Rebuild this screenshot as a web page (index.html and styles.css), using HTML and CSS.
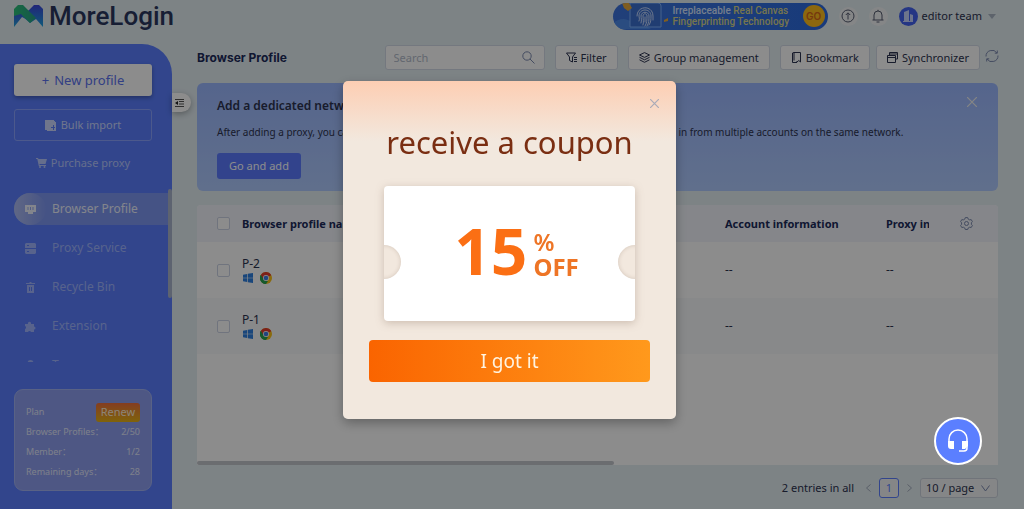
FILE: index.html
```
<!DOCTYPE html>
<html lang="en">
<head>
  <meta charset="UTF-8">
  <meta name="viewport" content="width=device-width, initial-scale=1.0">
  <title>MoreLogin - Browser Profile</title>
  <link rel="stylesheet" href="styles.css">
</head>
<body>

  <!-- shared icons -->
  <svg class="defs" aria-hidden="true">
    <symbol id="windows" viewBox="0 0 12 12">
      <path fill="#2f80e0" d="M0 2l5-.8v4.4H0zM5.8 1L12 0v5.6H5.8zM0 6.4h5v4.4L0 10zM5.8 6.4H12V12l-6.2-1z"/>
    </symbol>
    <symbol id="chrome" viewBox="0 0 24 24">
      <circle cx="12" cy="12" r="12" fill="#fbc116"/>
      <path fill="#e33b2e" d="M12 12L1.6 6a12 12 0 0 1 20.8 0z"/>
      <path fill="#27a350" d="M12 12L1.6 6A12 12 0 0 0 12 24z"/>
      <path fill="#e33b2e" d="M12 6h10.4L12 12 6.800 15 1.600 6z"/>
      <path fill="#27a350" d="M1.600 6l5.200 9L12 18l4 0-4 6A12 12 0 0 1 1.600 6z"/>
      <circle cx="12" cy="12" r="6" fill="#fff"/>
      <circle cx="12" cy="12" r="4.600" fill="#3f7fe8"/>
    </symbol>
  </svg>

  <header class="topbar">
    <a class="logo" href="#">
      <svg width="30" height="24" viewBox="0 0 30 24">
        <defs>
          <linearGradient id="lg-left" x1="0" y1="0" x2="0" y2="1">
            <stop offset="0" stop-color="#3b4fd8"/><stop offset="1" stop-color="#22a6d8"/>
          </linearGradient>
          <linearGradient id="lg-right" x1="0" y1="0" x2="0" y2="1">
            <stop offset="0" stop-color="#3d46dc"/><stop offset="1" stop-color="#1ba3e0"/>
          </linearGradient>
          <linearGradient id="lg-top" x1="0" y1="0" x2="1" y2="0">
            <stop offset="0" stop-color="#2cc178"/><stop offset="1" stop-color="#26a08a"/>
          </linearGradient>
        </defs>
        <path fill="url(#lg-left)" d="M0 8h12l3 4-3 3-4-2-8 10z"/>
        <path fill="url(#lg-right)" d="M15 6l5-5h5l4 4v18l-7-8-6 4-8-7z"/>
        <path fill="url(#lg-top)" d="M0 12V5l4-4h5l13 13-6 5-9-9z"/>
      </svg>
      <span>MoreLogin</span>
    </a>
    <div class="topbar-right">
      <a class="ad" href="#">
        <svg class="ad-art" width="60" height="26" viewBox="0 0 60 26">
          <path fill="#4d8bea" d="M0 20c6-4 12-6 18-1s14 2 20 7H4z"/>
          <path fill="#3b6fd0" stroke="#7fb2ff" d="M17 0h28a3 3 0 0 1 3 3v21H17z"/>
          <path fill="#e8a93b" d="M9 0h7l3 5-4 3-4-3zM51 17l4-2v3l-4 1z"/>
          <path fill="none" stroke="#c9dcff" stroke-linecap="round" d="M24 13c0-11 16-11 16 0v4M26 18c1-2 0-4 0-5 0-8 12-8 12 0 0 4 0 6-2 9M28 20c1-3 0-5 0-7 0-5 8-5 8 0 0 4 0 7-2 10M30 22c1-3 0-6 0-9 0-3 4-3 4 0 0 4 0 7-2 10M32 14v5"/>
        </svg>
        <span class="ad-text"><span class="ad-light">Irreplaceable</span> Real Canvas<br>Fingerprinting Technology</span>
        <span class="ad-go">GO</span>
      </a>
      <button class="round-btn" aria-label="Upgrade">
        <svg width="14" height="14" viewBox="0 0 14 14" class="line"><circle cx="7" cy="7" r="6"/><path d="M7 10.500V4M4.800 6L7 3.800 9.200 6"/></svg>
      </button>
      <button class="round-btn" aria-label="Notifications">
        <svg width="14" height="14" viewBox="0 0 14 14" class="line"><path d="M1.500 11h11M3 11V6a4 4 0 0 1 8 0v5M7 .8V2M5.500 13h3"/></svg>
      </button>
      <button class="user">
        <span class="avatar">
          <svg width="12" height="12" viewBox="0 0 12 12" fill="#c6d3ff"><path d="M2 2l5-2v11H2zM8 4l3 1v6H8zM1 11h10v1H1z"/></svg>
        </span>
        <span>editor team</span>
        <span class="caret"></span>
      </button>
    </div>
  </header>

  <div class="layout">
    <aside class="sidebar">
      <button class="collapse" aria-label="Collapse menu">
        <svg width="9" height="8" viewBox="0 0 9 8"><path stroke="#555" d="M0 .5h9M4 2.500h5M4 5h5M0 7.500h9"/><path fill="#222" d="M0 4l3-2v4z"/></svg>
      </button>
      <button class="side-btn new-profile"><span>+</span> New profile</button>
      <button class="side-btn bulk">
        <svg width="11" height="11" viewBox="0 0 11 11" fill="currentColor"><path d="M0 0h9v1H1v9H0z"/><path fill-rule="evenodd" d="M1 1h9v1h1v9H2v-1H1zM8 5v2H6v1h2v2h1V8h1V7H9V5z"/></svg>
        Bulk import
      </button>
      <a class="purchase" href="#">
        <svg width="11" height="10" viewBox="0 0 11 10" fill="currentColor"><path d="M0 0h2l.5 1H11L9.500 6H3.500l.2 1H10v1H2.800L1.300 1H0z"/><circle cx="4" cy="9" r="1"/><circle cx="8.500" cy="9" r="1"/></svg>
        Purchase proxy
      </a>

      <nav class="menu">
        <a class="menu-item active" href="#">
          <span class="menu-icon"><svg width="11" height="11" viewBox="0 0 11 11" fill="currentColor"><path fill-rule="evenodd" d="M0 1h11v7H0zM2.500 3v3h1V3zM5 3v3h1V3zM7.500 3v3h1V3z"/><path d="M3 8h5v2H3z"/></svg></span>
          Browser Profile
        </a>
        <a class="menu-item" href="#">
          <span class="menu-icon"><svg width="11" height="11" viewBox="0 0 11 11" fill="currentColor"><path fill-rule="evenodd" d="M1 0h9l1 1v4H0V1zM2 2v1h2V2zM0 6h11v4l-1 1H1l-1-1zM2 8v1h2V8z"/></svg></span>
          Proxy Service
        </a>
        <a class="menu-item" href="#">
          <span class="menu-icon"><svg width="11" height="11" viewBox="0 0 11 11" fill="currentColor"><path d="M1 1h3l1-1h1l1 1h3v1H1z"/><path fill-rule="evenodd" d="M2 3h7v8H2zM4 5v4h1V5zM6 5v4h1V5z"/></svg></span>
          Recycle Bin
        </a>
        <a class="menu-item" href="#">
          <span class="menu-icon"><svg width="11" height="11" viewBox="0 0 11 11" fill="currentColor"><path d="M0 3h3a1.600 1.600 0 1 1 3 0h3v2.500a1.500 1.500 0 1 1 0 3V11H6a1.600 1.600 0 0 0-3 0H0V8a1.600 1.600 0 0 0 0-3z"/></svg></span>
          Extension
        </a>
        <a class="menu-item" href="#">
          <span class="menu-icon"><svg width="11" height="11" viewBox="0 0 11 11" fill="currentColor"><circle cx="5.500" cy="3" r="3"/><path d="M0 11c0-5 11-5 11 0z"/></svg></span>
          Team
        </a>
      </nav>

      <div class="plan">
        <div class="plan-row plan-top"><span>Plan</span><button class="renew">Renew</button></div>
        <div class="plan-row"><span>Browser Profiles：</span><span>2/50</span></div>
        <div class="plan-row"><span>Member：</span><span>1/2</span></div>
        <div class="plan-row"><span>Remaining days：</span><span>28</span></div>
      </div>
    </aside>

    <main class="content">
      <div class="toolbar">
        <h1>Browser Profile</h1>
        <label class="search">
          <input type="text" placeholder="Search" aria-label="Search">
          <svg width="13" height="13" viewBox="0 0 13 13" class="line"><circle cx="5" cy="5" r="4.200"/><path d="M8 8l4.500 4.500"/></svg>
        </label>
        <button class="tool">
          <svg width="11" height="11" viewBox="0 0 11 11" class="line dark"><path d="M.5 1h9L6.500 5v5l-3-1.500V5zM8 5.500h3M8 7.500h3M8 9.500h3"/></svg>
          Filter
        </button>
        <button class="tool">
          <svg width="11" height="11" viewBox="0 0 11 11" class="line dark"><path d="M5.500.6L10.500 3 5.500 5.400.5 3zM.5 5.300l5 2.500 5-2.500M.5 7.800l5 2.500 5-2.500"/></svg>
          Group management
        </button>
        <button class="tool">
          <svg width="11" height="11" viewBox="0 0 11 11" class="line dark"><path d="M3 .5h6.500V10L7.800 8.500 6 10V9M3 .5L1.500 1v9.500H6M3 .5v8"/></svg>
          Bookmark
        </button>
        <div class="sync">
          <button class="tool">
            <svg width="11" height="11" viewBox="0 0 11 11" class="line dark"><path d="M2.500 3V.5h8V7H8.500M.5 3.500h8v7h-8zM.5 5.500h8M2.500 2h8"/></svg>
            Synchronizer
          </button>
          <button class="refresh" aria-label="Refresh">
            <svg width="14" height="14" viewBox="0 0 14 14" class="line"><path d="M1 7.500A6 6 0 0 1 12 4M13 6.500A6 6 0 0 1 2 10M12.300 1.500V4.200H9.800M1.700 12.500V9.800h2.500"/></svg>
          </button>
        </div>
      </div>

      <section class="promo">
        <h2>Add a dedicated network to your profile</h2>
        <p>After adding a proxy, you can isolate networks and avoid getting associated when you are logging in from multiple accounts on the same network.</p>
        <button class="go-add">Go and add</button>
        <button class="promo-close" aria-label="Close">
          <svg width="10" height="10" viewBox="0 0 10 10"><path stroke="#f2f2f2" stroke-width="1.200" d="M0 0l10 10M10 0L0 10"/></svg>
        </button>
      </section>

      <section class="panel">
        <table>
          <thead>
            <tr>
              <th class="col-check"><input type="checkbox" aria-label="Select all"></th>
              <th>Browser profile name</th>
              <th class="col-account">Account information</th>
              <th class="col-proxy">Proxy information</th>
              <th class="col-gear">
                <button class="gear" aria-label="Columns">
                  <svg width="13" height="13" viewBox="0 0 13 13" class="line"><path d="M5.300.6h2.400l.5 1.500 1.500.8 1.500-.3 1.200 2-1 1.200v1.500l1 1.200-1.200 2-1.500-.3-1.500.8-.5 1.500H5.300l-.5-1.500-1.500-.8-1.500.3-1.200-2 1-1.200V5.800l-1-1.200 1.200-2 1.500.3 1.500-.8z"/><circle cx="6.500" cy="6.500" r="2"/></svg>
                </button>
              </th>
            </tr>
          </thead>
          <tbody>
            <tr>
              <td class="col-check"><input type="checkbox" aria-label="Select P-2"></td>
              <td>
                <div>P-2</div>
                <div class="marks"><svg width="10" height="10"><use href="#windows"/></svg><svg width="12" height="12"><use href="#chrome"/></svg></div>
              </td>
              <td>--</td>
              <td>--</td>
              <td></td>
            </tr>
            <tr>
              <td class="col-check"><input type="checkbox" aria-label="Select P-1"></td>
              <td>
                <div>P-1</div>
                <div class="marks"><svg width="10" height="10"><use href="#windows"/></svg><svg width="12" height="12"><use href="#chrome"/></svg></div>
              </td>
              <td>--</td>
              <td>--</td>
              <td></td>
            </tr>
          </tbody>
        </table>
        <div class="scroll-x"></div>
      </section>

      <footer class="pager">
        <span class="total">2 entries in all</span>
        <button class="arrow" aria-label="Previous"><svg width="5" height="8" viewBox="0 0 5 8" class="line"><path d="M4.500.5l-4 3.500 4 3.500"/></svg></button>
        <button class="page">1</button>
        <button class="arrow" aria-label="Next"><svg width="5" height="8" viewBox="0 0 5 8" class="line"><path d="M.5.5l4 3.500-4 3.500"/></svg></button>
        <div class="page-size">
          <select aria-label="Page size">
            <option>10 / page</option>
            <option>20 / page</option>
          </select>
          <svg width="9" height="7" viewBox="0 0 9 7" class="line"><path d="M.5.5l4 5.500 4-5.500"/></svg>
        </div>
      </footer>
    </main>
  </div>

  <div class="overlay">
    <div class="modal" role="dialog" aria-labelledby="modal-title">
      <button class="modal-close" aria-label="Close">
        <svg width="9" height="9" viewBox="0 0 9 9"><path stroke="#a9abb8" stroke-width="1.200" d="M0 0l9 9M9 0L0 9"/></svg>
      </button>
      <h2 id="modal-title">receive a coupon</h2>
      <div class="coupon">
        <span class="amount">15</span>
        <span class="unit">%<br><span class="off">OFF</span></span>
      </div>
      <button class="got-it">I got it</button>
    </div>
  </div>

  <button class="support" aria-label="Support">
    <svg width="22" height="24" viewBox="0 0 22 24" fill="none" stroke="#fff" stroke-width="1.500">
      <path d="M2 13v-3a9 9 0 0 1 18 0v9a3 3 0 0 1-3 3h-5"/>
      <path fill="#fff" stroke="none" d="M1 12h6v8H4a3 3 0 0 1-3-3zM15 12h6v5l-3 3h-3z"/>
    </svg>
  </button>

</body>
</html>
```
FILE: styles.css
```
* {
  box-sizing: border-box;
}

body {
  margin: 0;
  height: 100vh;
  display: flex;
  flex-direction: column;
  overflow: hidden;
  font-family: "Noto Sans", "Noto Sans CJK SC", sans-serif;
  font-size: 12px;
  line-height: 16px;
  color: #2d3350;
  background: #e4eef3;
}

button,
input,
select {
  font: inherit;
  color: inherit;
}

button {
  border: none;
  padding: 0;
  background: none;
  cursor: pointer;
}

a {
  color: inherit;
  text-decoration: none;
}

svg {
  flex: none;
}

.defs {
  display: none;
}

.line {
  fill: none;
  stroke: #7d8bb0;
}

.dark {
  stroke: #2d3350;
}

/* top bar */
.topbar {
  height: 44px;
  flex: none;
  padding: 0 28px 12px 14px;
  display: flex;
  justify-content: space-between;
  align-items: center;
}

.logo {
  display: flex;
  align-items: center;
  gap: 5px;
  font-family: Roboto, sans-serif;
  font-size: 26px;
  line-height: 32px;
  font-weight: 500;
  color: #2b3860;
}

.topbar-right {
  display: flex;
  align-items: center;
  gap: 11px;
}

.ad {
  width: 215px;
  height: 27px;
  border-radius: 14px;
  overflow: hidden;
  display: flex;
  align-items: center;
  background: linear-gradient(90deg, #3c74dc, #2d6be0);
}

.ad-text {
  flex: 1;
  font-family: Roboto, sans-serif;
  font-size: 10px;
  line-height: 11px;
  font-weight: 500;
  white-space: nowrap;
  color: #d9d68c;
}

.ad-light {
  color: #d7e5ff;
}

.ad-go {
  width: 22px;
  height: 22px;
  margin-right: 3px;
  border-radius: 50%;
  background: #ffbe1c;
  color: #d8671a;
  font-family: Inter, sans-serif;
  font-size: 10px;
  line-height: 22px;
  font-weight: 600;
  text-align: center;
}

.round-btn {
  width: 19px;
  height: 19px;
  border-radius: 50%;
  background: #f3f5f6;
  display: flex;
  align-items: center;
  justify-content: center;
}

.round-btn .line {
  stroke: #555b70;
}

.user {
  display: flex;
  align-items: center;
  gap: 4px;
  font-size: 11px;
}

.avatar {
  width: 19px;
  height: 19px;
  border-radius: 50%;
  background: #4463f0;
  display: flex;
  align-items: center;
  justify-content: center;
}

.caret {
  margin-left: 2px;
  border: 4px solid transparent;
  border-top: 5px solid #a9b5c4;
  border-bottom: none;
}

.layout {
  flex: 1;
  min-height: 0;
  display: flex;
}

/* sidebar */
.sidebar {
  position: relative;
  width: 172px;
  flex: none;
  padding: 20px 0 18px 14px;
  display: flex;
  flex-direction: column;
  border-top-right-radius: 30px;
  background: #5b7fff;
}

.collapse {
  position: absolute;
  left: 172px;
  top: 49px;
  width: 19px;
  height: 19px;
  padding-right: 4px;
  border-radius: 0 10px 10px 0;
  background: #fff;
  box-shadow: 0 2px 6px rgba(0, 0, 0, 0.3);
  display: flex;
  align-items: center;
  justify-content: center;
}

.side-btn {
  height: 32px;
  flex: none;
  margin: 0 20px 13px 0;
  border-radius: 3px;
  display: flex;
  align-items: center;
  justify-content: center;
  gap: 5px;
}

.new-profile {
  background: #fff;
  color: #5b73f0;
  font-size: 13px;
  box-shadow: 0 2px 4px rgba(0, 0, 0, 0.3);
}

.bulk {
  border: 1px solid #8aa3ff;
  font-size: 11px;
  color: #ccd7ff;
}

.purchase {
  margin: 1px 20px 0 0;
  height: 16px;
  flex: none;
  display: flex;
  align-items: center;
  justify-content: center;
  gap: 4px;
  font-size: 11px;
  color: #b9c8ff;
}

.menu {
  position: relative;
  flex: 1;
  min-height: 0;
  overflow: hidden;
  margin: 18px 0 27px;
  padding-top: 4px;
}

.menu::after {
  content: "";
  position: absolute;
  right: 0;
  top: 0;
  width: 4px;
  height: 109px;
  border-radius: 2px;
  background: #aab4cc;
}

.menu-item {
  height: 32px;
  margin-bottom: 7px;
  display: flex;
  align-items: center;
  gap: 6px;
  border-radius: 16px 0 0 16px;
  color: #a0b5ff;
}

.menu-icon {
  width: 32px;
  height: 32px;
  display: flex;
  align-items: center;
  justify-content: center;
}

.active {
  color: #eef2ff;
  background: #7f98f2;
}

.active .menu-icon {
  border-radius: 50%;
  background: linear-gradient(90deg, #aebcf3, #7f98f2);
}

.plan {
  flex: none;
  margin-right: 20px;
  padding: 12px 11px 8px;
  border: 1px solid #a3b3f2;
  border-radius: 9px;
  background: #8f9ff0;
}

.plan-row {
  height: 20px;
  display: flex;
  justify-content: space-between;
  align-items: center;
  font-size: 9px;
  white-space: nowrap;
  color: #e3e8fc;
}

.renew {
  width: 44px;
  height: 19px;
  border-radius: 3px;
  font-size: 11px;
  color: #fff0d8;
  background: linear-gradient(180deg, #f0703c, #e8b416);
}

/* content */
.content {
  flex: 1;
  min-width: 0;
  padding: 1px 26px 11px 25px;
  display: flex;
  flex-direction: column;
}

.toolbar {
  height: 25px;
  flex: none;
  margin-right: -1px;
  display: flex;
  align-items: center;
  gap: 10px;
  font-size: 11px;
}

.toolbar h1 {
  margin: 0 auto 0 0;
  font-family: Inter, sans-serif;
  font-size: 12px;
  font-weight: 700;
  color: #1c2a5a;
}

.search {
  width: 160px;
  height: 25px;
  padding: 0 9px 0 8px;
  border: 1px solid #d3dbe8;
  border-radius: 3px;
  background: #fff;
  display: flex;
  align-items: center;
}

.search input {
  flex: 1;
  min-width: 0;
  padding: 0;
  border: none;
  outline: none;
  background: none;
}

.search input::placeholder {
  color: #b4bccb;
}

.tool {
  height: 25px;
  padding: 0 10px;
  border: 1px solid #d3dbe8;
  border-radius: 3px;
  background: #fff;
  display: flex;
  align-items: center;
  gap: 4px;
  white-space: nowrap;
}

.sync {
  display: flex;
  align-items: center;
  gap: 5px;
  margin-left: -4px;
}

.promo {
  position: relative;
  height: 108px;
  flex: none;
  margin: 13px 0 14px;
  padding: 15px 20px;
  border-radius: 6px;
  background: linear-gradient(180deg, #9bb8ff, #b0cbff);
}

.promo h2 {
  margin: 0 0 10px;
  font-size: 12px;
  line-height: 16px;
  font-weight: 600;
}

.promo p {
  margin: 0 0 13px;
  font-size: 10px;
  line-height: 16px;
  white-space: nowrap;
}

.go-add {
  width: 84px;
  height: 26px;
  border-radius: 3px;
  background: #5b7bff;
  color: #fff;
  font-size: 11px;
}

.promo-close {
  position: absolute;
  top: 14px;
  right: 21px;
  display: flex;
}

.panel {
  flex: 1;
  min-height: 0;
  display: flex;
  flex-direction: column;
  justify-content: space-between;
  border-radius: 4px 4px 0 0;
  overflow: hidden;
  background: #fff;
}

table {
  width: 100%;
  table-layout: fixed;
  border-collapse: collapse;
  text-align: left;
}

th {
  height: 37px;
  padding: 0;
  font-size: 11px;
  font-weight: 700;
  color: #1c2a5a;
  background: #f2f5fb;
  white-space: nowrap;
}

td {
  height: 56px;
  padding: 0;
}

tbody tr:nth-child(even) {
  background: #f8fafb;
}

.col-check {
  width: 45px;
  padding-left: 20px;
}

.col-account {
  width: 161px;
}

.col-proxy {
  width: 43px;
  overflow: hidden;
}

.col-gear {
  width: 69px;
  padding-left: 31px;
}

.gear {
  display: flex;
}

input[type="checkbox"] {
  appearance: none;
  display: block;
  width: 13px;
  height: 13px;
  margin: 0;
  border: 1px solid #cdd4e6;
  border-radius: 2px;
  background: #fff;
}

.marks {
  display: flex;
  align-items: center;
  gap: 7px;
  padding-left: 1px;
}

.scroll-x {
  width: 52%;
  height: 4px;
  border-radius: 2px;
  background: #c3c6cc;
}

.pager {
  height: 20px;
  flex: none;
  margin-top: 13px;
  display: flex;
  align-items: center;
  justify-content: flex-end;
  gap: 8px;
  font-size: 11px;
}

.total {
  margin-right: 4px;
}

.arrow {
  display: flex;
}

.arrow .line {
  stroke: #a3adbd;
}

.page {
  width: 20px;
  height: 20px;
  border: 1px solid #5b7fff;
  border-radius: 3px;
  background: #f3f5f6;
  color: #5b7fff;
}

.page-size {
  position: relative;
}

.page-size select {
  display: block;
  width: 78px;
  height: 20px;
  padding: 0 5px;
  border: 1px solid #cdd4de;
  border-radius: 3px;
  appearance: none;
  background: #f3f5f6;
}

.page-size svg {
  position: absolute;
  top: 7px;
  right: 8px;
  pointer-events: none;
}

/* coupon dialog */
.overlay {
  position: fixed;
  inset: 0;
  padding: 0 5px 9px 0;
  display: flex;
  align-items: center;
  justify-content: center;
  background: rgba(0, 0, 0, 0.45);
}

.modal {
  position: relative;
  width: 333px;
  padding: 40px 26px 37px;
  border-radius: 5px;
  background: linear-gradient(180deg, #fdceb3, #f2e8de 60px);
  box-shadow: 0 4px 12px rgba(0, 0, 0, 0.3);
}

.modal-close {
  position: absolute;
  top: 18px;
  right: 17px;
  display: flex;
}

.modal h2 {
  margin: 0 0 23px;
  font-size: 31px;
  line-height: 42px;
  font-weight: 400;
  text-align: center;
  color: #7a2e12;
}

.coupon {
  position: relative;
  height: 135px;
  margin: 0 15px 19px;
  border-radius: 4px;
  overflow: hidden;
  display: flex;
  align-items: center;
  justify-content: center;
  gap: 6px;
  padding-left: 14px;
  background: #fff;
  filter: drop-shadow(0 2px 4px rgba(90, 60, 40, 0.25));
}

/* side notches */
.coupon::before,
.coupon::after {
  content: "";
  position: absolute;
  top: 59px;
  width: 34px;
  height: 34px;
  border-radius: 50%;
  background: #f2e8de;
  box-shadow: inset 0 0 4px rgba(90, 60, 40, 0.2);
}

.coupon::before {
  left: -17px;
}

.coupon::after {
  right: -17px;
}

.amount {
  padding-bottom: 6px;
  font-size: 64px;
  line-height: 64px;
  font-weight: 700;
  color: #fb6f14;
}

.unit {
  font-size: 24px;
  line-height: 25px;
  font-weight: 600;
  color: #ee7526;
}

.off {
  font-weight: 700;
}

.got-it {
  display: block;
  width: 100%;
  height: 42px;
  border-radius: 4px;
  font-size: 19px;
  color: #fff3e0;
  background: linear-gradient(90deg, #fa6400, #ff991c);
}

.support {
  position: fixed;
  right: 42px;
  bottom: 44px;
  width: 48px;
  height: 48px;
  border: 2px solid #fff;
  border-radius: 50%;
  background: #5b7fff;
  display: flex;
  align-items: center;
  justify-content: center;
}
```
